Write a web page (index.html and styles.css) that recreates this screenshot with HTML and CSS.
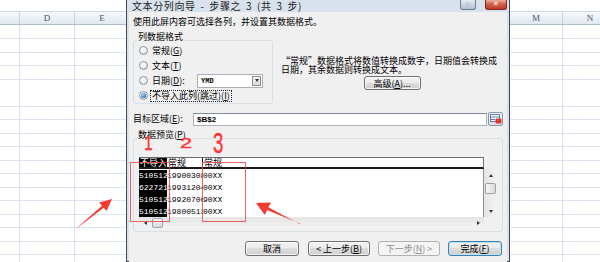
FILE: index.html
```html
<!DOCTYPE html>
<html lang="zh-CN">
<head>
<meta charset="utf-8">
<title>文本分列向导</title>
<link rel="stylesheet" href="styles.css">
</head>
<body>
<div class="sheet">
  <div class="sheet-top"></div>
  <div class="colhead">
    <div class="ch w20"></div>
    <div class="ch w55">D</div>
    <div class="ch w55">E</div>
    <div class="ch wgap"></div>
    <div class="ch w53">M</div>
    <div class="ch w55">N</div>
  </div>
  <div class="cells">
    <div class="cc w20"></div>
    <div class="cc w55"></div>
    <div class="cc w55"></div>
    <div class="cc wgap"></div>
    <div class="cc w53"></div>
    <div class="cc w55"></div>
  </div>
</div>

<div class="dialog">
  <div class="titlebar">
    <span class="title">文本分列向导 - 步骤之 3 (共 3 步)</span>
    <div class="tb-btns">
      <span class="tb-help">?</span>
      <span class="tb-close">✕</span>
    </div>
  </div>
  <div class="body">
    <p class="intro">使用此屏内容可选择各列，并设置其数据格式。</p>
    <div class="row1">
      <div class="group fmt">
        <div class="gtitle">列数据格式</div>
        <div class="radios">
          <div class="rrow"><span class="radio"></span><span>常规(<u>G</u>)</span></div>
          <div class="rrow"><span class="radio"></span><span>文本(<u>T</u>)</span></div>
          <div class="rrow"><span class="radio"></span><span class="dlabel">日期(<u>D</u>):</span>
            <div class="combo"><span class="combo-val">YMD</span><span class="combo-btn"><span class="tri-down"></span></span></div>
          </div>
          <div class="rrow"><span class="radio on"></span><span class="focus">不导入此列(跳过)(<u>I</u>)</span></div>
        </div>
      </div>
      <div class="desc">
        <p>“常规”数据格式将数值转换成数字，日期值会转换成<br>日期，其余数据则转换成文本。</p>
        <div class="btn adv">高级(<u>A</u>)...</div>
      </div>
    </div>
    <div class="dest">
      <span class="dest-label">目标区域(<u>E</u>):</span>
      <span class="dest-input">$B$2</span>
      <span class="dest-btn">
        <svg width="12" height="10" viewBox="0 0 12 10"><rect x="0.5" y="0.5" width="9" height="7" fill="#fff" stroke="#5b7fb3"/><line x1="0.5" y1="3" x2="9.5" y2="3" stroke="#5b7fb3"/><line x1="0.5" y1="5.5" x2="5" y2="5.5" stroke="#5b7fb3"/><rect x="5.5" y="4.5" width="6" height="5" rx="1" fill="#e2382a"/></svg>
      </span>
    </div>
    <div class="group preview">
      <div class="gtitle">数据预览(<u>P</u>)</div>
      <div class="pgrid">
        <div class="phead">
          <span class="ph c1">不导入此列</span>
          <span class="ph c2">常规</span>
          <span class="ph c3">常规</span>
        </div>
        <div class="pdata">
          <div class="prow"><span class="c1">510512</span><span class="c2">19900308</span><span class="c3">00XX</span></div>
          <div class="prow"><span class="c1">622721</span><span class="c2">19931204</span><span class="c3">00XX</span></div>
          <div class="prow"><span class="c1">510512</span><span class="c2">19920706</span><span class="c3">90XX</span></div>
          <div class="prow"><span class="c1">510512</span><span class="c2">19800513</span><span class="c3">00XX</span></div>
        </div>
        <div class="vscroll">
          <span class="sbtn"><span class="tri-up"></span></span>
          <span class="thumb vthumb"></span>
          <span class="spacer"></span>
          <span class="sbtn"><span class="tri-down"></span></span>
        </div>
        <div class="hscroll">
          <span class="sbtn"><span class="tri-left"></span></span>
          <span class="thumb hthumb"></span>
          <span class="spacer"></span>
          <span class="sbtn"><span class="tri-right"></span></span>
        </div>
        <div class="corner"></div>
      </div>
    </div>
    <div class="actions">
      <div class="btn b54 cancel">取消</div>
      <div class="btn b62">&lt; 上一步(<u>B</u>)</div>
      <div class="btn b62 disabled">下一步(<u>N</u>) &gt;</div>
      <div class="btn b54 default">完成(<u>F</u>)</div>
    </div>
  </div>
</div>

<span class="mark m1">1</span>
<span class="mark m2">2</span>
<span class="mark m3">3</span>
<div class="rbox rb1"></div>
<div class="rbox rb2"></div>
<svg class="arrows" width="600" height="262" viewBox="0 0 600 262">
  <polygon points="76.6,228.4 103.6,207.7 106.5,211 112,199 99.2,202.6 102,205.7 77.4,227.6" fill="#f23a2e"/>
  <polygon points="300.4,224.6 268.3,207.3 271,202.5 256,203 264.8,215 267.1,209.9 299.6,223.6" fill="#f23a2e"/>
</svg>
</body>
</html>
```

FILE: styles.css
```css
* { box-sizing: border-box; margin: 0; padding: 0; }
html, body { width: 600px; height: 262px; overflow: hidden; }
body {
  position: relative;
  background: #fff;
  font-family: "Noto Sans CJK SC", "Noto Sans", sans-serif;
  font-size: 9px;
  color: #000;
}
u { text-decoration: underline; text-underline-offset: 1px; }

/* spreadsheet background */
.sheet { width: 600px; height: 262px; overflow: hidden; }
.sheet-top { height: 12px; background: #fff; border-bottom: 1px solid #cfd8e3; }
.colhead {
  display: flex;
  height: 13px;
  background: linear-gradient(#f7f9fc, #e2e8f0);
  border-bottom: 1px solid #aebccd;
}
.ch {
  flex: none;
  border-right: 1px solid #c8d1dd;
  text-align: center;
  font-family: "Liberation Serif", serif;
  font-size: 9px;
  line-height: 12px;
  color: #4a5566;
}
.w20 { width: 20px; }
.w55 { width: 55px; }
.w53 { width: 53px; }
.wgap { width: 380px; }
.cells {
  display: flex;
  height: 237px;
  background: repeating-linear-gradient(to bottom, transparent 0, transparent 12.5px, #dde2ee 12.5px, #dde2ee 13.5px);
  background-position: 0 1px;
}
.cc { flex: none; border-right: 1px solid #dde2ee; }

/* dialog window */
.dialog {
  position: absolute;
  left: 126px;
  top: 0;
  width: 384px;
  height: 262px;
  border: 1px solid #3f4a57;
  border-top: 0;
  background: #d9e2ec;
  padding: 0 2px;
}
.titlebar { display: flex; height: 12px; align-items: flex-start; }
.title {
  padding: 1px 0 0 3px;
  font-size: 10px;
  line-height: 10px;
  letter-spacing: 0.6px;
  word-spacing: 2px;
  color: #1a1a1a;
  white-space: nowrap;
}
.tb-btns { margin-left: auto; display: flex; gap: 9px; }
.tb-help {
  width: 16px; height: 10px;
  border: 1px solid #6f7f92; border-top: 0;
  border-radius: 0 0 3px 3px;
  background: linear-gradient(#e6ecf3, #b5c2d3);
  color: #fff;
  font: bold 8px/9px "Liberation Sans", sans-serif;
  text-align: center;
  text-shadow: 0 0 1px #2c3a4c;
}
.tb-close {
  width: 22px; height: 10px;
  border: 1px solid #7b2a20; border-top: 0;
  border-radius: 0 0 3px 3px;
  background: linear-gradient(#eab0a4, #d4604a 45%, #c0392b);
  color: #fff;
  font: bold 7px/9px "DejaVu Sans", sans-serif;
  text-align: center;
}
.body {
  height: 250px;
  background: #f0f0f0;
  padding: 5px 4px 0 4px;
}
.intro { line-height: 10px; white-space: nowrap; }

.row1 { display: flex; margin-top: 5px; align-items: flex-start; }
.group { border: 1px solid #d5dfe5; border-radius: 3px; }
.fmt { width: 140px; margin-top: 8px; flex: none; }
.gtitle {
  display: table;
  margin: -9px 0 0 3px;
  padding: 0 1px;
  background: #f0f0f0;
  line-height: 10px;
}
.radios { margin-top: 1px; }
.rrow { display: flex; align-items: center; height: 15px; white-space: nowrap; }
.radio {
  flex: none;
  position: relative;
  width: 9px; height: 9px;
  border-radius: 50%;
  border: 1px solid #8a96a3;
  background: radial-gradient(circle at 40% 35%, #fff 0, #f0f0f0 40%, #d0d0d0 100%);
  margin: 0 4px 0 5px;
}
.radio.on::after {
  content: "";
  position: absolute;
  left: 1px; top: 1px;
  width: 5px; height: 5px;
  border-radius: 50%;
  background: radial-gradient(circle at 40% 35%, #a6d8ff, #2d6fb7 70%, #1d4f8f);
}
.dlabel { width: 45px; }
.combo {
  display: flex;
  width: 66px; height: 14px;
  border: 1px solid #abadb3;
  background: #fff;
}
.combo-val { flex: 1; padding-left: 3px; font: bold 7px/12px "Liberation Mono", monospace; }
.combo-btn {
  width: 9px;
  margin: 1px;
  border: 1px solid #8f8f8f;
  background: linear-gradient(#f6f6f6, #d8d8d8);
  display: flex; align-items: center; justify-content: center;
}
.focus {
  border: 1px dotted #222;
  line-height: 10px;
  padding: 0 1px;
  margin-left: -2px;
}
.desc { margin: 24px 0 0 8px; flex: 1; line-height: 9px; white-space: nowrap; }

.btn {
  height: 15px;
  border: 1px solid #707070;
  border-radius: 3px;
  background: linear-gradient(#f2f2f2 0, #ebebeb 50%, #dddddd 50%, #cfcfcf 100%);
  box-shadow: inset 0 0 0 1px rgba(255,255,255,.75);
  display: flex; align-items: center; justify-content: center;
  line-height: 13px;
  white-space: nowrap;
}
.adv { width: 57px; height: 14px; margin: 2px auto 0; }

.dest { display: flex; margin-top: 8px; height: 14px; align-items: center; }
.dest-label { width: 60px; line-height: 14px; white-space: nowrap; }
.dest-input {
  flex: 1;
  height: 13px;
  border: 1px solid #abb1b9;
  border-top-color: #7f8a96;
  background: #fff;
  font: bold 8px/11px "Liberation Sans", sans-serif;
  padding-left: 3px;
}
.dest-btn {
  width: 15px; height: 14px;
  margin-left: 1px;
  border: 1px solid #8c98a6;
  border-radius: 2px;
  background: linear-gradient(#f4f6f9, #d6dde6);
  display: flex; align-items: center; justify-content: center;
}

.preview { margin-top: 12px; }
.pgrid {
  display: grid;
  grid-template-columns: 345px 13px;
  grid-template-rows: 12px 48px 11px;
  margin: 17px 5px 3px;
}
.phead {
  grid-area: 1 / 1 / 2 / 2;
  display: flex;
  background: #fff;
  border-top: 1px solid #6d6d6d;
  border-bottom: 2px solid #1b1b1b;
  border-right: 1px solid #6d6d6d;
}
.ph { line-height: 9px; white-space: nowrap; overflow: hidden; padding-left: 1px; }
.c1 { width: 28px; flex: none; background: #000; color: #fff; }
.c2 { width: 36px; flex: none; }
.c3 { flex: 1; }
.phead .c1, .phead .c2 { border-right: 1px solid #000; }
.pdata {
  grid-area: 2 / 1 / 3 / 2;
  background: #fff;
  font: 8px/12px "Liberation Mono", monospace;
  border-right: 1px solid #8f8f8f;
  padding-top: 1px;
}
.prow { display: flex; height: 12px; }
.prow span { overflow: hidden; white-space: nowrap; }

.vscroll {
  grid-area: 2 / 2 / 3 / 3;
  background: linear-gradient(to right, #e4e4e4, #f3f3f3);
  display: flex; flex-direction: column; align-items: center;
}
.hscroll {
  grid-area: 3 / 1 / 4 / 2;
  background: linear-gradient(#e4e4e4, #f3f3f3);
  display: flex; align-items: center;
}
.corner { grid-area: 3 / 2 / 4 / 3; background: #f0f0f0; }
.sbtn { flex: none; width: 12px; height: 12px; display: flex; align-items: center; justify-content: center; }
.vscroll .sbtn { width: 13px; }
.hscroll .sbtn { height: 11px; }
.spacer { flex: 1; }
.thumb {
  flex: none;
  border: 1px solid #9aa2ab;
  border-radius: 2px;
  background: linear-gradient(to right, #f7f7f7, #dadada);
}
.vthumb { width: 11px; height: 11px; margin-top: 2px; }
.hthumb { width: 11px; height: 10px; margin-left: 1px; background: linear-gradient(#f7f7f7, #dadada); }
.tri-up { width: 0; height: 0; border-left: 2.5px solid transparent; border-right: 2.5px solid transparent; border-bottom: 3px solid #333; }
.tri-down { width: 0; height: 0; border-left: 2.5px solid transparent; border-right: 2.5px solid transparent; border-top: 3px solid #333; }
.tri-left { width: 0; height: 0; border-top: 2.5px solid transparent; border-bottom: 2.5px solid transparent; border-right: 3px solid #333; }
.tri-right { width: 0; height: 0; border-top: 2.5px solid transparent; border-bottom: 2.5px solid transparent; border-left: 3px solid #333; }

.actions { display: flex; justify-content: flex-end; gap: 8px; margin-top: 9px; padding-right: 1px; }
.b54 { width: 54px; }
.b62 { width: 62px; }
.cancel { margin-right: 1px; }
.btn.disabled { border-color: #adb2b5; background: #f4f4f4; color: #8d8d8d; box-shadow: none; }
.btn.default { border-color: #3c7fb1; box-shadow: inset 0 0 0 1px #bde3f9; }

/* annotations */
.mark {
  position: absolute;
  color: #ff3434;
  font-family: "Liberation Sans", sans-serif;
  font-weight: normal;
  line-height: 1;
  transform-origin: 0 0;
  -webkit-text-stroke: 0.4px #ff3434;
}
.m1 { left: 144px; top: 132px; font-size: 21px; transform: scaleX(.75); }
.m2 { left: 180px; top: 135px; font-size: 15px; transform: scaleX(1.45); }
.m3 { left: 213px; top: 128px; font-size: 30px; transform: scaleX(.62); }
.rbox { position: absolute; border: 1px solid rgba(238, 70, 70, .85); }
.rb1 { left: 130px; top: 162px; width: 40px; height: 60px; }
.rb2 { left: 202px; top: 162px; width: 44px; height: 60px; }
.arrows { position: absolute; left: 0; top: 0; pointer-events: none; }
```
